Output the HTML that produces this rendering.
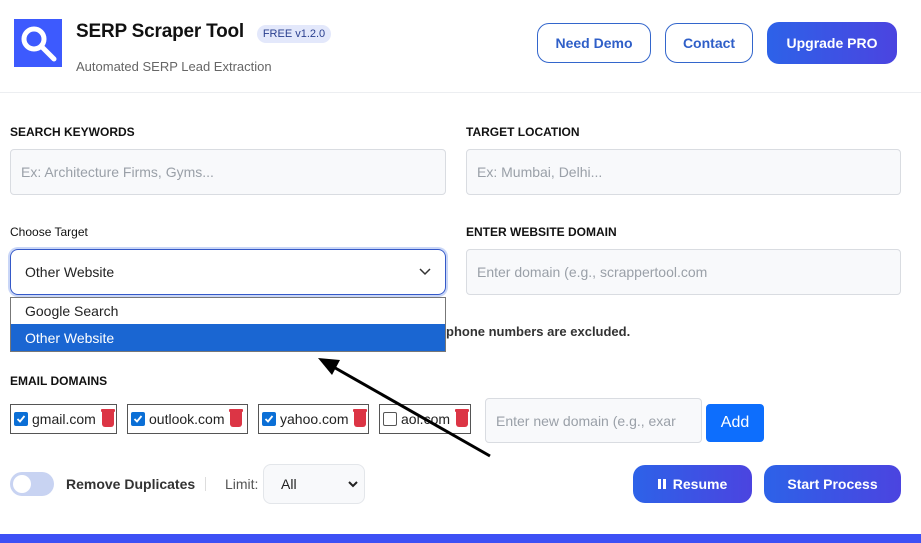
<!DOCTYPE html>
<html><head><meta charset="utf-8"><style>
*{box-sizing:border-box;margin:0;padding:0}
body{width:921px;height:543px;background:#fff;font-family:"Liberation Sans",sans-serif;position:relative;overflow:hidden;color:#111}
.a{position:absolute}
.lbl{font-size:12px;font-weight:bold;color:#111}
.inp{background:#f8f9fb;border:1px solid #d9dce1;border-radius:4px;color:#9aa0a8;font-size:14px;padding-left:10px;display:flex;align-items:center}
.btno{border:1.5px solid #3366cc;border-radius:12px;color:#2f5fc8;font-weight:bold;font-size:14px;display:flex;align-items:center;justify-content:center}
.btng{background:linear-gradient(90deg,#2d62e8,#4b44e0);color:#fff;border-radius:12px;font-weight:bold;font-size:14px;display:flex;align-items:center;justify-content:center}
.chip{border:1px solid #555;height:30px;top:404px;display:flex;align-items:center;padding-left:3px;font-size:14px;color:#222;gap:4px}
.cb{width:14px;height:14px;border-radius:2px;background:#0b6fd6;display:flex;align-items:center;justify-content:center}
.cbo{width:14px;height:14px;border-radius:2px;border:1px solid #555;background:#fff}
.tr{width:12px;height:16px;background:#dc3545;border-radius:1px 1px 3px 3px;position:relative;margin-left:2px}
.tr:before{content:"";position:absolute;top:-2px;left:-1px;width:14px;height:3px;background:#dc3545;border-radius:1px}
</style></head><body>
<div class="a" style="left:14px;top:19px;width:48px;height:48px;background:#3d5afe">
<svg width="48" height="48"><circle cx="20" cy="20" r="10" fill="none" stroke="#fff" stroke-width="5"/><line x1="28" y1="28" x2="40" y2="40" stroke="#fff" stroke-width="5" stroke-linecap="round"/></svg></div>
<div class="a" style="left:76px;top:21px;font-size:19px;font-weight:bold;color:#111;letter-spacing:-0.2px">SERP Scraper Tool</div>
<div class="a" style="left:257px;top:25px;width:74px;height:18px;background:#e3e8fb;border-radius:9px;color:#2a3f8f;font-size:11px;display:flex;align-items:center;justify-content:center">FREE v1.2.0</div>
<div class="a" style="left:76px;top:59px;font-size:13px;color:#666">Automated SERP Lead Extraction</div>
<div class="a btno" style="left:537px;top:23px;width:114px;height:40px">Need Demo</div>
<div class="a btno" style="left:665px;top:23px;width:88px;height:40px">Contact</div>
<div class="a btng" style="left:767px;top:22px;width:130px;height:42px">Upgrade PRO</div>
<div class="a" style="left:0;top:92px;width:921px;height:1px;background:#eceef1"></div>

<div class="a lbl" style="left:10px;top:125px">SEARCH KEYWORDS</div>
<div class="a inp" style="left:10px;top:149px;width:436px;height:46px">Ex: Architecture Firms, Gyms...</div>
<div class="a lbl" style="left:466px;top:125px">TARGET LOCATION</div>
<div class="a inp" style="left:466px;top:149px;width:435px;height:46px">Ex: Mumbai, Delhi...</div>

<div class="a lbl" style="left:10px;top:225px;font-weight:normal;color:#111">Choose Target</div>
<div class="a" style="left:10px;top:249px;width:436px;height:46px;border:1.5px solid #3559c8;border-radius:8px;box-shadow:0 0 0 2px #c9d6f7;font-size:14px;color:#222;display:flex;align-items:center;padding-left:14px">Other Website
<svg class="a" style="right:14px;top:18px" width="12" height="8"><path d="M1 1 L6 6 L11 1" fill="none" stroke="#333" stroke-width="1.5"/></svg></div>
<div class="a lbl" style="left:466px;top:225px">ENTER WEBSITE DOMAIN</div>
<div class="a inp" style="left:466px;top:249px;width:435px;height:46px">Enter domain (e.g., scrappertool.com</div>

<div class="a" style="left:10px;top:297px;width:436px;height:55px;border:1px solid #777;background:#fff;font-size:14px;color:#222">
<div style="height:26px;display:flex;align-items:center;padding-left:14px">Google Search</div>
<div style="height:27px;display:flex;align-items:center;padding-left:14px;background:#1a66d2;color:#fff">Other Website</div></div>
<div class="a" style="left:446px;top:324px;font-size:13px;font-weight:bold;color:#333">phone numbers are excluded.</div>

<div class="a lbl" style="left:10px;top:374px">EMAIL DOMAINS</div>
<div class="a chip" style="left:10px;width:107px"><div class="cb"><svg width="10" height="10"><path d="M1.5 5 L4 7.5 L8.5 2" fill="none" stroke="#fff" stroke-width="1.8"/></svg></div>gmail.com<div class="tr"></div></div>
<div class="a chip" style="left:127px;width:121px"><div class="cb"><svg width="10" height="10"><path d="M1.5 5 L4 7.5 L8.5 2" fill="none" stroke="#fff" stroke-width="1.8"/></svg></div>outlook.com<div class="tr"></div></div>
<div class="a chip" style="left:258px;width:111px"><div class="cb"><svg width="10" height="10"><path d="M1.5 5 L4 7.5 L8.5 2" fill="none" stroke="#fff" stroke-width="1.8"/></svg></div>yahoo.com<div class="tr"></div></div>
<div class="a chip" style="left:379px;width:92px"><div class="cbo"></div>aol.com<div class="tr"></div></div>
<div class="a inp" style="left:485px;top:398px;width:217px;height:45px;font-size:14px;overflow:hidden;white-space:nowrap">Enter new domain (e.g., exar</div>
<div class="a" style="left:706px;top:404px;width:58px;height:38px;background:#0d6efd;border-radius:4px;color:#fff;font-size:16px;display:flex;align-items:center;justify-content:center">Add</div>

<div class="a" style="left:10px;top:472px;width:44px;height:24px;border-radius:12px;background:#c8d3f2"><div style="position:absolute;left:3px;top:3px;width:18px;height:18px;border-radius:50%;background:#fff"></div></div>
<div class="a" style="left:66px;top:476px;font-size:14px;font-weight:bold;color:#333">Remove Duplicates</div>
<div class="a" style="left:205px;top:477px;width:1px;height:14px;background:#ddd"></div>
<div class="a" style="left:225px;top:476px;font-size:14px;color:#555">Limit:</div>
<div class="a" style="left:263px;top:464px;width:102px;height:40px;border:1px solid #e3e6ea;border-radius:8px;background:#f8f9fb;font-size:14px;color:#222;display:flex;align-items:center;padding-left:17px">All
<svg class="a" style="right:6px;top:16px" width="10" height="7"><path d="M1 1 L5 5 L9 1" fill="none" stroke="#222" stroke-width="2"/></svg></div>

<div class="a btng" style="left:633px;top:465px;width:119px;height:38px;font-size:14px"><span style="display:inline-flex;gap:2px;margin-right:7px"><i style="width:3px;height:10px;background:#fff;display:block"></i><i style="width:3px;height:10px;background:#fff;display:block"></i></span>Resume</div>
<div class="a btng" style="left:764px;top:465px;width:137px;height:38px;font-size:14px">Start Process</div>

<div class="a" style="left:0;top:534px;width:921px;height:9px;background:#3d50f5"></div>

<svg class="a" style="left:0;top:0" width="921" height="543"><line x1="490" y1="456" x2="330" y2="365" stroke="#000" stroke-width="3"/><polygon points="318,358 340,360 332,375" fill="#000"/></svg>
</body></html>
